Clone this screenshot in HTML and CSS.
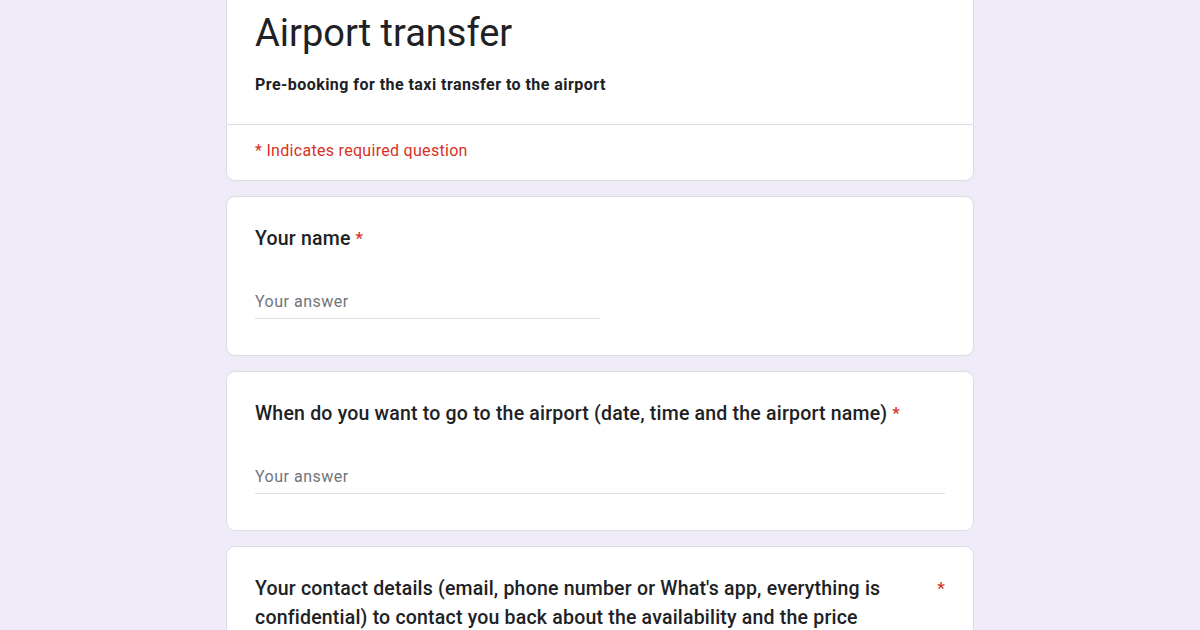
FILE: index.html
```html
<!DOCTYPE html>
<html lang="en">
<head>
<meta charset="utf-8">
<title>Airport transfer</title>
<link rel="stylesheet" href="styles.css">
</head>
<body>
<main class="form">
  <section class="card header-card">
    <div class="header-top">
      <h1 class="title">Airport transfer</h1>
      <p class="desc">Pre-booking for the taxi transfer to the airport</p>
    </div>
    <div class="required-note">* Indicates required question</div>
  </section>

  <section class="card question">
    <div class="q-title"><span class="q-text">Your name</span><span class="star">*</span></div>
    <div class="answer half">Your answer</div>
  </section>

  <section class="card question">
    <div class="q-title"><span class="q-text">When do you want to go to the airport (date, time and the airport name)</span><span class="star">*</span></div>
    <div class="answer">Your answer</div>
  </section>

  <section class="card question">
    <div class="q-title split"><span class="q-text">Your contact details (email, phone number or What's app, everything is confidential) to contact you back about the availability and the price</span><span class="star">*</span></div>
    <div class="answer">Your answer</div>
  </section>
</main>
</body>
</html>
```

FILE: styles.css
```css
html, body {
  margin: 0;
  padding: 0;
}
body {
  background: #f0ebf8;
  font-family: Roboto, "Liberation Sans", Arial, sans-serif;
  color: #202124;
  overflow: hidden;
}
.form {
  width: 748px;
  margin: -36px auto 0;
  display: flex;
  flex-direction: column;
  gap: 15px;
}
.card {
  background: #fff;
  border: 1px solid #dadce0;
  border-radius: 9px;
  box-sizing: border-box;
}
.header-top {
  padding: 42px 28px 28px;
  border-bottom: 1px solid #dadce0;
}
.title {
  margin: 0;
  font-size: 38px;
  font-weight: 400;
  line-height: 52px;
}
.desc {
  margin: 15px 0 0;
  font-size: 16px;
  font-weight: 700;
  line-height: 22px;
  letter-spacing: 0.45px;
}
.required-note {
  padding: 15px 28px 18px;
  color: #d93025;
  font-size: 16px;
  line-height: 22px;
  letter-spacing: 0.3px;
}
.question {
  padding: 27px 28px 36px;
}
.q-title {
  display: flex;
  font-size: 19.5px;
  font-weight: 500;
  line-height: 29px;
  letter-spacing: 0.2px;
}
.q-title.split {
  justify-content: space-between;
}
.q-title.split .q-text {
  flex: 1;
}
.star {
  color: #d93025;
  margin-left: 5px;
  font-size: 17px;
}
.answer {
  margin-top: 38px;
  padding-bottom: 5px;
  border-bottom: 1px solid #e0e0e0;
  color: #70757a;
  font-size: 16px;
  line-height: 22px;
  letter-spacing: 0.5px;
}
.answer.half {
  width: 50%;
}
```
